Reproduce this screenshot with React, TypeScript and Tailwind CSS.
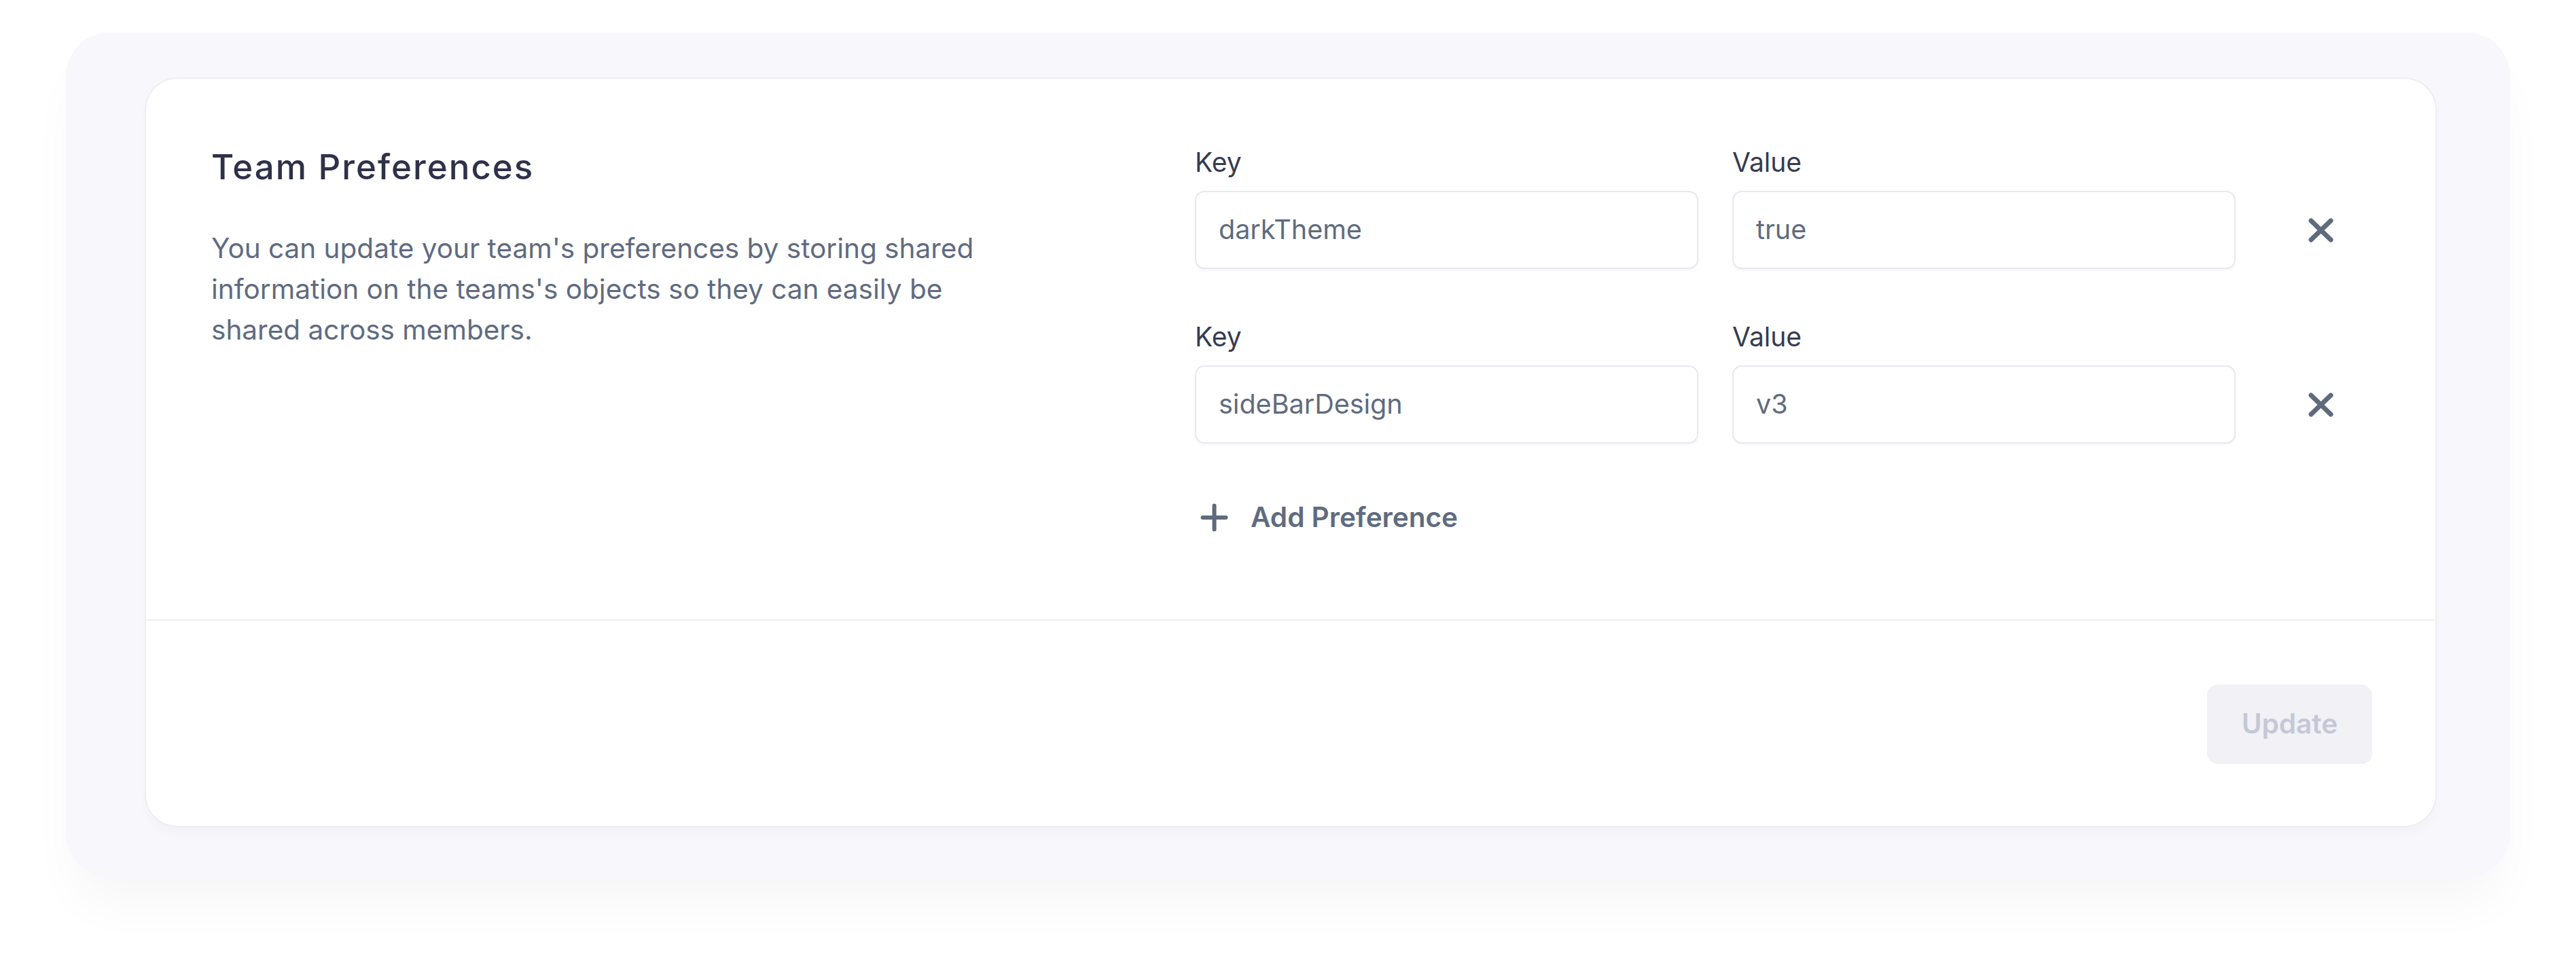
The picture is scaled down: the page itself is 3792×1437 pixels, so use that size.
import React from "react";

const XIcon = () => (
  <svg width="37" height="36" viewBox="0 0 37 36" fill="none" className="shrink-0">
    <path d="M4 4 L33 32 M33 4 L4 32" stroke="#5f6a7d" strokeWidth="7" strokeLinecap="round" />
  </svg>
);

const PlusIcon = () => (
  <svg width="41" height="42" viewBox="0 0 41 42" fill="none" className="shrink-0">
    <path d="M20.5 3.5 V38.5 M3.5 21 H37.5" stroke="#5f6a7d" strokeWidth="6" strokeLinecap="round" />
  </svg>
);

const Row = ({ k, v, first }: { k: string; v: string; first?: boolean }) => (
  <div className={first ? "flex items-end" : "flex items-end mt-[71px]"}>
    <div className="w-[741px] flex flex-col">
      <label className="text-[39px] leading-[58px] text-[#373b4f]">Key</label>
      <div className="mt-[13px] h-[115px] rounded-[14px] border-2 border-[#e8e8f0] bg-white shadow-[0_2px_3px_rgba(20,20,60,0.04)] flex items-center pl-[33px] text-[39.5px] text-[#5f6b80]">
        {k}
      </div>
    </div>
    <div className="w-[741px] ml-[50px] flex flex-col">
      <label className="text-[39px] leading-[58px] text-[#373b4f]">Value</label>
      <div className="mt-[13px] h-[115px] rounded-[14px] border-2 border-[#e8e8f0] bg-white shadow-[0_2px_3px_rgba(20,20,60,0.04)] flex items-center pl-[33px] text-[39.5px] text-[#5f6b80]">
        {v}
      </div>
    </div>
    <div className="h-[115px] ml-[107px] flex items-center">
      <XIcon />
    </div>
  </div>
);

export default function App() {
  return (
    <div
      className="min-h-screen bg-white pt-[48px] pl-[97px] pr-[97px]"
      style={{ fontFamily: "Inter, 'Noto Sans', sans-serif" }}
    >
      <div className="rounded-[64px] bg-[#f8f8fc] pl-[116px] pr-[108px] pt-[66px] pb-[73px] shadow-[0_50px_70px_-10px_rgba(20,20,50,0.035)]">
        <div className="rounded-[48px] bg-white border-2 border-[#ededf4] shadow-[0_10px_14px_rgba(20,20,60,0.025)]">
          <div className="flex pl-[96px] pr-[96px] pt-[94px] pb-[121px]">
            <div className="w-[1448px] shrink-0">
              <h2 className="mt-[7px] text-[51px] leading-[58px] font-medium text-[#2e3148] tracking-[2px]">
                Team Preferences
              </h2>
              <p className="mt-[61px] max-w-[1180px] text-[40.5px] leading-[60px] text-[#5f6b80]">
                You can update your team's preferences by storing shared information on the teams's objects so they can easily be shared across members.
              </p>
            </div>
            <div className="flex flex-col">
              <Row k="darkTheme" v="true" first />
              <Row k="sideBarDesign" v="v3" />
              <button className="mt-[80px] h-[58px] flex items-center self-start pl-[8px]">
                <PlusIcon />
                <span className="ml-[33px] text-[40.5px] font-semibold text-[#5f6b80]">Add Preference</span>
              </button>
            </div>
          </div>
          <div className="border-t-2 border-[#efeff5] flex justify-end pl-[96px] pr-[93px] pt-[94px] pb-[91px]">
            <button className="h-[117px] w-[243px] rounded-[16px] bg-[#f1f1f6] text-[40.5px] font-semibold text-[#c4c7d7]">
              Update
            </button>
          </div>
        </div>
      </div>
    </div>
  );
}
